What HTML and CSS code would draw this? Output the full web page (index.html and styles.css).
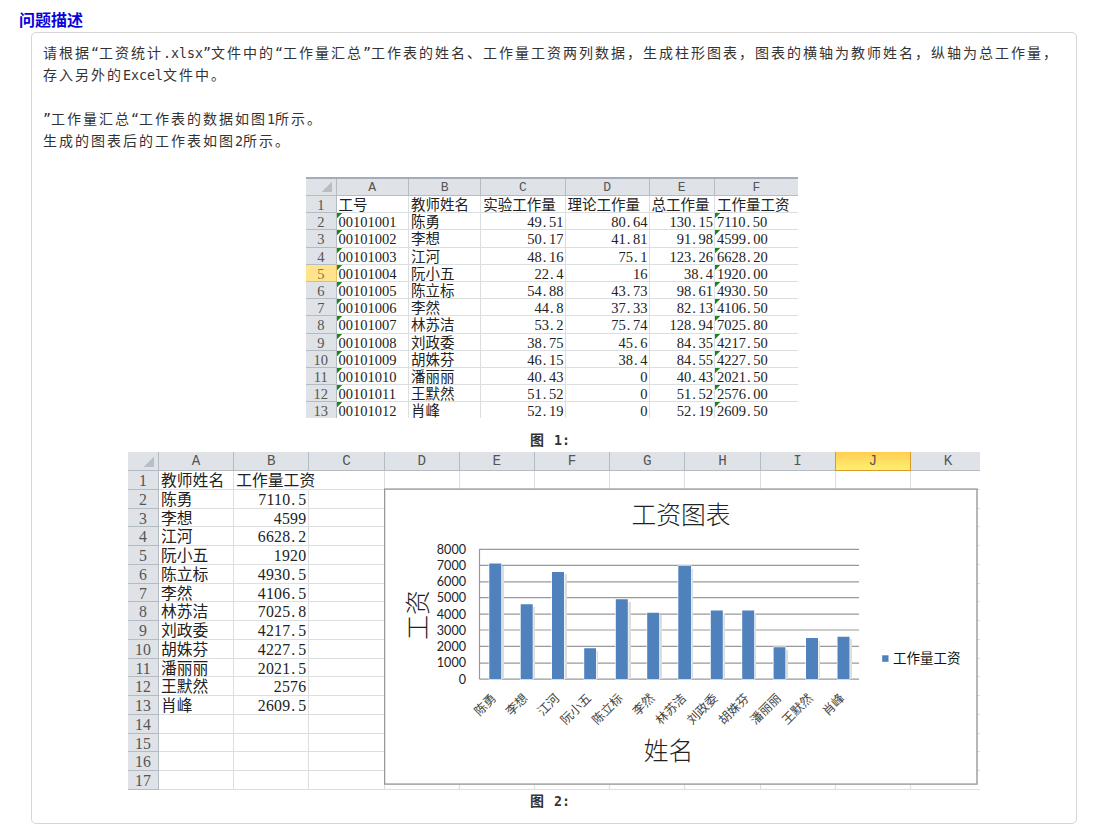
FILE: index.html
```
<!DOCTYPE html>
<html lang="zh-CN">
<head>
<meta charset="utf-8">
<title>问题描述</title>
<link rel="stylesheet" href="styles.css">
</head>
<body>
<h1 class="heading">问题描述</h1>
<main class="panel">
<p class="line">请根据<span class="en">“</span>工资统计<span class="en">.xlsx”</span>文件中的<span class="en">“</span>工作量汇总<span class="en">”</span>工作表的姓名、工作量工资两列数据，生成柱形图表，图表的横轴为教师姓名，纵轴为总工作量，</p>
<p class="line">存入另外的<span class="en">Excel</span>文件中。</p>
<p class="line"></p>
<p class="line"><span class="en">”</span>工作量汇总<span class="en">“</span>工作表的数据如图<span class="en">1</span>所示。</p>
<p class="line">生成的图表后的工作表如图<span class="en">2</span>所示。</p>

<section class="sheet salary">
<b class="corner"></b><b class="col">A</b><b class="col">B</b><b class="col">C</b><b class="col">D</b><b class="col">E</b><b class="col">F</b>
<b>1</b><span>工号</span><span>教师姓名</span><span>实验工作量</span><span>理论工作量</span><span>总工作量</span><span>工作量工资</span>
<b>2</b><span class="flag">00101001</span><span>陈勇</span><span class="num">49<i>.</i>51</span><span class="num">80<i>.</i>64</span><span class="num">130<i>.</i>15</span><span class="flag">7110<i>.</i>50</span>
<b>3</b><span class="flag">00101002</span><span>李想</span><span class="num">50<i>.</i>17</span><span class="num">41<i>.</i>81</span><span class="num">91<i>.</i>98</span><span class="flag">4599<i>.</i>00</span>
<b>4</b><span class="flag">00101003</span><span>江河</span><span class="num">48<i>.</i>16</span><span class="num">75<i>.</i>1</span><span class="num">123<i>.</i>26</span><span class="flag">6628<i>.</i>20</span>
<b class="current">5</b><span class="flag">00101004</span><span>阮小五</span><span class="num">22<i>.</i>4</span><span class="num">16</span><span class="num">38<i>.</i>4</span><span class="flag">1920<i>.</i>00</span>
<b>6</b><span class="flag">00101005</span><span>陈立标</span><span class="num">54<i>.</i>88</span><span class="num">43<i>.</i>73</span><span class="num">98<i>.</i>61</span><span class="flag">4930<i>.</i>50</span>
<b>7</b><span class="flag">00101006</span><span>李然</span><span class="num">44<i>.</i>8</span><span class="num">37<i>.</i>33</span><span class="num">82<i>.</i>13</span><span class="flag">4106<i>.</i>50</span>
<b>8</b><span class="flag">00101007</span><span>林苏洁</span><span class="num">53<i>.</i>2</span><span class="num">75<i>.</i>74</span><span class="num">128<i>.</i>94</span><span class="flag">7025<i>.</i>80</span>
<b>9</b><span class="flag">00101008</span><span>刘政委</span><span class="num">38<i>.</i>75</span><span class="num">45<i>.</i>6</span><span class="num">84<i>.</i>35</span><span class="flag">4217<i>.</i>50</span>
<b>10</b><span class="flag">00101009</span><span>胡姝芬</span><span class="num">46<i>.</i>15</span><span class="num">38<i>.</i>4</span><span class="num">84<i>.</i>55</span><span class="flag">4227<i>.</i>50</span>
<b>11</b><span class="flag">00101010</span><span>潘丽丽</span><span class="num">40<i>.</i>43</span><span class="num">0</span><span class="num">40<i>.</i>43</span><span class="flag">2021<i>.</i>50</span>
<b>12</b><span class="flag">00101011</span><span>王默然</span><span class="num">51<i>.</i>52</span><span class="num">0</span><span class="num">51<i>.</i>52</span><span class="flag">2576<i>.</i>00</span>
<b>13</b><span class="flag">00101012</span><span>肖峰</span><span class="num">52<i>.</i>19</span><span class="num">0</span><span class="num">52<i>.</i>19</span><span class="flag">2609<i>.</i>50</span>
</section>
<p class="caption first">图<span class="en"> 1:</span></p>

<section class="sheet result">
<b class="corner"></b><b class="col">A</b><b class="col">B</b><b class="col">C</b><b class="col">D</b><b class="col">E</b><b class="col">F</b><b class="col">G</b><b class="col">H</b><b class="col">I</b><b class="col active">J</b><b class="col">K</b>
<b>1</b><span>教师姓名</span><span class="spill">工作量工资</span><span></span><span></span><span></span><span></span><span></span><span></span><span></span><span></span><span></span>
<b>2</b><span>陈勇</span><span class="num">7110<i>.</i>5</span><span></span><span class="rest"></span>
<b>3</b><span>李想</span><span class="num">4599</span><span></span><span class="rest"></span>
<b>4</b><span>江河</span><span class="num">6628<i>.</i>2</span><span></span><span class="rest"></span>
<b>5</b><span>阮小五</span><span class="num">1920</span><span></span><span class="rest"></span>
<b>6</b><span>陈立标</span><span class="num">4930<i>.</i>5</span><span></span><span class="rest"></span>
<b>7</b><span>李然</span><span class="num">4106<i>.</i>5</span><span></span><span class="rest"></span>
<b>8</b><span>林苏洁</span><span class="num">7025<i>.</i>8</span><span></span><span class="rest"></span>
<b>9</b><span>刘政委</span><span class="num">4217<i>.</i>5</span><span></span><span class="rest"></span>
<b>10</b><span>胡姝芬</span><span class="num">4227<i>.</i>5</span><span></span><span class="rest"></span>
<b>11</b><span>潘丽丽</span><span class="num">2021<i>.</i>5</span><span></span><span class="rest"></span>
<b>12</b><span>王默然</span><span class="num">2576</span><span></span><span class="rest"></span>
<b>13</b><span>肖峰</span><span class="num">2609<i>.</i>5</span><span></span><span class="rest"></span>
<b>14</b><span></span><span></span><span></span><span class="rest"></span>
<b>15</b><span></span><span></span><span></span><span class="rest"></span>
<b>16</b><span></span><span></span><span></span><span class="rest"></span>
<b>17</b><span></span><span></span><span></span><span></span><span></span><span></span><span></span><span></span><span></span><span></span><span></span>
<svg class="chart" viewBox="384 488 594 297" width="594" height="297">
<rect class="frame" x="384.6" y="489.1" width="592.4" height="295"/>
<path class="grid" d="M479.5 549.3H859M479.5 565.3H859M479.5 581.8H859M479.5 597.7H859M479.5 614.2H859M479.5 630H859M479.5 646.4H859M479.5 663.2H859M479.5 679.2H859M479.5 549V679"/>
<g class="shadow"><path d="M492 566h12v113h-12zM523 607h12v72h-12zM555 574h12v105h-12zM587 651h11v28h-11zM619 602h12v77h-12zM650 615h12v64h-12zM682 569h11v110h-11zM713 613h12v66h-12zM744 613h12v66h-12zM777 650h11v29h-11zM809 641h11v38h-11zM840 639h12v40h-12z"/></g>
<g class="bars"><path d="M489.3 563.5h12V679h-12zM520.7 604.3h12V679h-12zM552 572h12V679h-12zM584.2 648.3h11.8V679h-11.8zM615.8 599.3h12V679h-12zM647.2 612.8h12V679h-12zM678.3 566h12.8V679h-12.8zM710.8 610.5h12V679h-12zM742.2 610.5h12V679h-12zM773.6 647.2h11.8V679h-11.8zM806 638h12V679h-12zM837.5 636.8h12V679h-12z"/></g>
<g class="ticks"><text x="466" y="553.5">8000</text><text x="466" y="569.9">7000</text><text x="466" y="586">6000</text><text x="466" y="602.3">5000</text><text x="466" y="618.5">4000</text><text x="466" y="634.8">3000</text><text x="466" y="651">2000</text><text x="466" y="667.2">1000</text><text x="466" y="683.6">0</text></g>
<g class="names">
<text transform="translate(497 699) rotate(-45)">陈勇</text>
<text transform="translate(528.6 699) rotate(-45)">李想</text>
<text transform="translate(560.3 699) rotate(-45)">江河</text>
<text transform="translate(592 699) rotate(-45)">阮小五</text>
<text transform="translate(623.6 699) rotate(-45)">陈立标</text>
<text transform="translate(655.3 699) rotate(-45)">李然</text>
<text transform="translate(687 699) rotate(-45)">林苏洁</text>
<text transform="translate(718.6 699) rotate(-45)">刘政委</text>
<text transform="translate(750 699) rotate(-45)">胡姝芬</text>
<text transform="translate(781.8 699) rotate(-45)">潘丽丽</text>
<text transform="translate(813.5 699) rotate(-45)">王默然</text>
<text transform="translate(845.2 699) rotate(-45)">肖峰</text>
</g>
<g class="titles"><text x="681" y="524">工资图表</text><text x="668.5" y="760">姓名</text><text transform="translate(427 615) rotate(-90)">工资</text></g>
<rect class="key" x="882.2" y="655.3" width="6.3" height="6.5"/>
<text class="legend" x="893" y="663">工作量工资</text>
</svg>
</section>
<p class="caption second">图<span class="en"> 2:</span></p>
</main>
</body>
</html>
```
FILE: styles.css
```
* { box-sizing: border-box; }
body {
  margin: 0;
  height: 824px;
  overflow: hidden;
  background: #fff;
  color: #333;
  font-family: "Noto Sans CJK SC", sans-serif;
}
.heading {
  margin: 0;
  padding: 8px 0 0 19px;
  height: 32px;
  font-size: 16px;
  line-height: 22px;
  font-weight: 700;
  color: #0a00dc;
}
.panel {
  margin-left: 31px;
  width: 1046px;
  height: 792px;
  padding: 8px 11px 0;
  border: 1px solid #d6d6d6;
  border-radius: 5px;
}
.line {
  margin: 0;
  height: 22px;
  font-size: 14px;
  line-height: 22px;
  letter-spacing: 2px;
  white-space: nowrap;
}
.en {
  font-family: "DejaVu Sans Mono", monospace;
  font-size: 13.3px;
  letter-spacing: 0;
  white-space: pre;
}
.caption {
  margin: 0 0 0 487px;
  height: 22px;
  font-size: 14px;
  line-height: 22px;
  font-weight: 700;
  letter-spacing: 2px;
}
.first { margin-top: 10px; height: 24px; }
.second { margin-top: -2px; }

.sheet {
  display: grid;
  position: relative;
  color: #222;
  font-family: "Liberation Serif", "Noto Sans CJK SC", serif;
  white-space: nowrap;
}
.sheet span, .sheet b {
  border-right: 1px solid #dcdfe0;
  border-bottom: 1px solid #dcdfe0;
  min-width: 0;
}
.sheet span { padding-left: 2px; }
.sheet b {
  font-weight: 400;
  text-align: center;
  color: #555;
  background: #dfe3e8;
  border-color: #b5bbc2;
}
.sheet .col { font-family: "Liberation Mono", monospace; font-size: .9em; }
.sheet i {
  display: inline-block;
  width: .5em;
  padding-left: 1px;
  font-style: normal;
  text-align: left;
}
.sheet .num { text-align: right; padding: 0 1px 0 0; }
.sheet .corner {
  background: linear-gradient(315deg, #b8bec5 7px, transparent 7.5px) 0 0 / calc(100% - 4px) calc(100% - 3px) no-repeat #dfe3e8;
}
.sheet .flag { background: linear-gradient(135deg, #138a13 3.4px, transparent 3.9px); }
.sheet .current { background: #ffe48b; border-color: #e8bf58; color: #86744a; }
.sheet .active {
  background: linear-gradient(#ffce52, #fff06e);
  border-color: #d99a30;
  box-shadow: -1px 0 #d99a30;
}

.salary {
  margin: 26px 0 0 263px;
  width: 492px;
  height: 241px;
  overflow: hidden;
  border-top: 2px solid #a3acbd;
  grid-template-columns: 30.5px 72.5px 72.2px 84.4px 84px 65.4px 83px;
  grid-template-rows: 17px;
  grid-auto-rows: 17.2px;
  font-size: 14.5px;
  line-height: 18px;
}
.salary > :nth-child(7n) { border-right: 0; }
.result {
  margin-left: 85px;
  width: 852px;
  height: 339px;
  overflow: hidden;
  grid-template-columns: 31px repeat(11, 75.2px);
  grid-template-rows: 19px;
  grid-auto-rows: 18.76px;
  font-size: 15.8px;
  line-height: 19.5px;
}
.result .num { padding-right: 2px; letter-spacing: .25px; }
.result .spill { border-right-color: transparent; }
.result .rest { grid-column: 5 / -1; border-right: 0; }

.chart {
  position: absolute;
  left: 256px;
  top: 36px;
}
.frame { fill: #fff; stroke: #999; stroke-width: 1.4; }
.grid { fill: none; stroke: #999; stroke-width: 1.2; }
.shadow { fill: #ddd; }
.bars { fill: #4f81bd; stroke: #fff; stroke-width: 1.2; paint-order: stroke; }
.ticks { font: 12.6px Lato, sans-serif; fill: #222; text-anchor: end; }
.names { font: 12.4px "Noto Sans CJK SC", sans-serif; fill: #444; text-anchor: end; }
.titles { font: 300 24.8px "Noto Sans CJK SC", sans-serif; fill: #222; text-anchor: middle; }
.key { fill: #4f81bd; }
.legend { font: 13.5px "Noto Sans CJK SC", sans-serif; fill: #111; }
```
